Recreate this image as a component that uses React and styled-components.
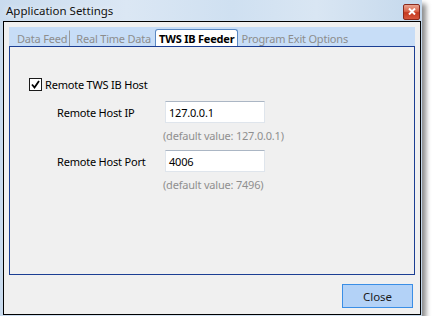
import React from "react";
import styled, { createGlobalStyle } from "styled-components";

const Global = createGlobalStyle`
  html, body { margin: 0; padding: 0; background: #ffffff; }
  body { font-family: "Noto Sans", "Open Sans", sans-serif; font-size: 11px; letter-spacing: -0.2px; }
`;

const Window = styled.div`
  width: 422px;
  height: 316px;
  display: flex;
  flex-direction: column;
  box-sizing: border-box;
  background: linear-gradient(90deg, #c9dbee 0%, #dbe7f4 30%, #cfe0f1 55%, #d9e6f3 75%, #c4d8ec 100%);
  box-shadow: 4px 4px 5px rgba(0, 0, 0, 0.45);
`;

const TitleBar = styled.div`
  height: 21px;
  flex: none;
  display: flex;
  align-items: center;
  justify-content: space-between;
  padding: 0 2px 0 6px;
  box-sizing: border-box;
`;

const Title = styled.span`
  font-family: "Noto Sans", sans-serif;
  font-size: 11.5px;
  letter-spacing: 0;
  color: #111;
  text-shadow: 0 0 6px rgba(255, 255, 255, 0.9);
`;

const CloseX = styled.div`
  width: 15px;
  height: 14px;
  margin-top: 2px;
  border: 1px solid #8a2a1c;
  border-radius: 2px;
  background: linear-gradient(180deg, #e9a38f 0%, #d9644a 45%, #c4391f 55%, #d6563b 100%);
  display: flex;
  align-items: center;
  justify-content: center;
`;

const Client = styled.div`
  flex: 1;
  margin: 0 1px 1px 3px;
  border: 1px solid #000;
  background: #f0f0f0;
  padding: 5px 5px 6px 5px;
  display: flex;
  flex-direction: column;
`;

const TabStrip = styled.div`
  height: 19px;
  background: #c7ddf7;
  display: flex;
  align-items: flex-end;
  padding-left: 5px;
`;

const Tab = styled.div`
  height: ${(p) => (p.$active ? "17px" : "16px")};
  padding: 0 ${(p) => (p.$active ? "3px" : "2px")};
  display: flex;
  align-items: center;
  font-size: 11px;
  font-weight: ${(p) => (p.$active ? 700 : 400)};
  color: ${(p) => (p.$active ? "#000" : "#8d8d8d")};
  background: ${(p) => (p.$active ? "#ffffff" : "transparent")};
  border: 1px solid ${(p) => (p.$active ? "#5b89c3" : "transparent")};
  border-bottom: none;
  border-radius: ${(p) => (p.$active ? "3px 3px 0 0" : "0")};
  border-right: ${(p) => (p.$sep ? "1px solid #9a9a9a" : undefined)};
  margin-right: ${(p) => p.$mr || 0}px;
  white-space: nowrap;
  box-sizing: border-box;
`;

const Panel = styled.div`
  height: 229px;
  box-sizing: border-box;
  border: 1px solid #1b3e93;
  padding: 30px 0 0 19px;
`;

const CheckRow = styled.label`
  display: flex;
  align-items: center;
  height: 14px;
  gap: 3px;
  color: #000;
`;

const Box = styled.span`
  width: 11px;
  height: 11px;
  border: 1px solid #1a1a1a;
  background: #fff;
  display: flex;
  align-items: center;
  justify-content: center;
`;

const Fields = styled.div`
  display: grid;
  grid-template-columns: 108px 100px;
  row-gap: 6px;
  margin: 10px 0 0 28px;
  align-items: center;
`;

const Label = styled.span`
  color: #000;
`;

const Input = styled.div`
  height: 22px;
  box-sizing: border-box;
  border: 1px solid #dfe5ec;
  border-top-color: #abb6c4;
  background: #fff;
  padding-left: 3px;
  display: flex;
  align-items: center;
  color: #000;
`;

const Hint = styled.span`
  grid-column: 2;
  height: 14px;
  line-height: 14px;
  margin: 0 0 1px -2px;
  color: #8f8f8f;
  white-space: nowrap;
`;

const Footer = styled.div`
  flex: 1;
  display: flex;
  justify-content: flex-end;
  align-items: flex-end;
  padding-right: 2px;
`;

const Button = styled.button`
  width: 71px;
  height: 24px;
  border: 1px solid #3a8ee6;
  background: #b3d2f7;
  font-family: "Noto Sans", sans-serif;
  font-size: 11.5px;
  color: #1a1a1a;
  padding: 0;
`;

export default function App() {
  return (
    <>
      <Global />
      <Window>
        <TitleBar>
          <Title>Application Settings</Title>
          <CloseX>
            <svg width="8" height="7" viewBox="0 0 8 7">
              <path d="M1 0.5 L7 6.5 M7 0.5 L1 6.5" stroke="#fff" strokeWidth="2" />
            </svg>
          </CloseX>
        </TitleBar>
        <Client>
          <TabStrip>
            <Tab $sep $mr={3}>Data Feed</Tab>
            <Tab $mr={1}>Real Time Data</Tab>
            <Tab $active>TWS IB Feeder</Tab>
            <Tab>Program Exit Options</Tab>
          </TabStrip>
          <Panel>
            <CheckRow>
              <Box>
                <svg width="9" height="9" viewBox="0 0 9 9">
                  <path d="M1 4.5 L3.5 7.5 L8 1" fill="none" stroke="#000" strokeWidth="1.8" />
                </svg>
              </Box>
              Remote TWS IB Host
            </CheckRow>
            <Fields>
              <Label>Remote Host IP</Label>
              <Input>127.0.0.1</Input>
              <Hint>(default value: 127.0.0.1)</Hint>
              <Label>Remote Host Port</Label>
              <Input>4006</Input>
              <Hint>(default value: 7496)</Hint>
            </Fields>
          </Panel>
          <Footer>
            <Button>Close</Button>
          </Footer>
        </Client>
      </Window>
    </>
  );
}
